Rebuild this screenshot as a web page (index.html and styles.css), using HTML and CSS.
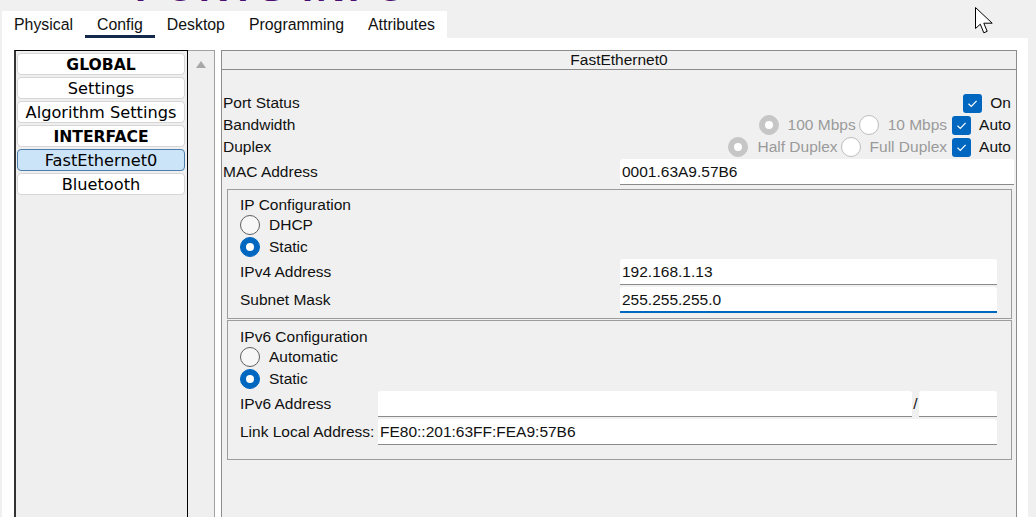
FILE: index.html
```html
<!DOCTYPE html>
<html lang="en">
<head>
<meta charset="utf-8">
<title>FastEthernet0 Config</title>
<link rel="stylesheet" href="styles.css">
</head>
<body>
<div class="title-strip"><span class="title">PORTS INFO</span></div>
<nav class="tabs">
  <span class="tab">Physical</span>
  <span class="tab active">Config</span>
  <span class="tab">Desktop</span>
  <span class="tab">Programming</span>
  <span class="tab">Attributes</span>
</nav>
<div class="content">
  <aside class="sidebar">
    <ul class="nav-list">
      <li class="nav-item head">GLOBAL</li>
      <li class="nav-item">Settings</li>
      <li class="nav-item">Algorithm Settings</li>
      <li class="nav-item head">INTERFACE</li>
      <li class="nav-item selected">FastEthernet0</li>
      <li class="nav-item">Bluetooth</li>
    </ul>
    <div class="scrollbar"><span class="arrow-up"></span></div>
  </aside>
  <section class="panel">
    <header class="panel-head">FastEthernet0</header>
    <div class="panel-body">
      <div class="line">
        <span class="label">Port Status</span>
        <div class="controls">
          <span class="opt chk"><span class="check"><svg viewBox="0 0 19 19" width="19" height="19"><path d="M5.5 9.8 L8.3 12.4 L13.6 6.8" fill="none" stroke="#fff" stroke-width="1.2"/></svg></span><span>On</span></span>
        </div>
      </div>
      <div class="line">
        <span class="label">Bandwidth</span>
        <div class="controls">
          <span class="opt dis"><span class="radio dis on"></span><span>100 Mbps</span></span>
          <span class="opt dis"><span class="radio dis"></span><span>10 Mbps</span></span>
          <span class="opt chk"><span class="check"><svg viewBox="0 0 19 19" width="19" height="19"><path d="M5.5 9.8 L8.3 12.4 L13.6 6.8" fill="none" stroke="#fff" stroke-width="1.2"/></svg></span><span>Auto</span></span>
        </div>
      </div>
      <div class="line">
        <span class="label">Duplex</span>
        <div class="controls">
          <span class="opt dis"><span class="radio dis on"></span><span>Half Duplex</span></span>
          <span class="opt dis"><span class="radio dis"></span><span>Full Duplex</span></span>
          <span class="opt chk"><span class="check"><svg viewBox="0 0 19 19" width="19" height="19"><path d="M5.5 9.8 L8.3 12.4 L13.6 6.8" fill="none" stroke="#fff" stroke-width="1.2"/></svg></span><span>Auto</span></span>
        </div>
      </div>
      <div class="field-row mac">
        <span class="label wide">MAC Address</span>
        <span class="field">0001.63A9.57B6</span>
      </div>

      <div class="group ipv4">
        <div class="group-title">IP Configuration</div>
        <div class="radio-row"><span class="radio"></span><span>DHCP</span></div>
        <div class="radio-row"><span class="radio on"></span><span>Static</span></div>
        <div class="field-row first">
          <span class="label v4">IPv4 Address</span>
          <span class="field">192.168.1.13</span>
        </div>
        <div class="field-row">
          <span class="label v4">Subnet Mask</span>
          <span class="field focus">255.255.255.0</span>
        </div>
      </div>

      <div class="group ipv6">
        <div class="group-title">IPv6 Configuration</div>
        <div class="radio-row"><span class="radio"></span><span>Automatic</span></div>
        <div class="radio-row"><span class="radio on"></span><span>Static</span></div>
        <div class="field-row first">
          <span class="label v6">IPv6 Address</span>
          <span class="field"></span>
          <span class="slash">/</span>
          <span class="field prefix"></span>
        </div>
        <div class="field-row">
          <span class="label v6">Link Local Address:</span>
          <span class="field">FE80::201:63FF:FEA9:57B6</span>
        </div>
      </div>
    </div>
  </section>
</div>
<svg class="cursor" viewBox="0 0 19 28" width="19" height="28"><path d="M0.5 0.5 L0.5 21.5 L5.3 17.2 L8.8 25.8 L12.2 24.3 L8.8 16.2 L17.2 16.2 Z" fill="#fff" stroke="#000" stroke-width="1" stroke-linejoin="miter"/></svg>
</body>
</html>
```
FILE: styles.css
```css
* { box-sizing: border-box; }
html, body { margin: 0; padding: 0; }
body {
  background: #f0f0f0;
  font-family: "Liberation Sans", Arial, sans-serif;
  color: #111;
  width: 1036px;
  height: 517px;
  overflow: hidden;
  position: relative;
}

.title-strip {
  height: 11px;
  overflow: hidden;
  display: flex;
  align-items: flex-end;
  padding-left: 135px;
}
.title {
  font-size: 40px;
  line-height: 40px;
  margin-bottom: 4px;
  font-weight: bold;
  color: #4b0f72;
  letter-spacing: 3px;
  white-space: nowrap;
}

.tabs {
  display: flex;
  width: max-content;
  margin-left: 2px;
  height: 27px;
  background: #fff;
}
.tab {
  padding: 0 12px;
  font-size: 15.85px;
  line-height: 27px;
  height: 27px;
  color: #111;
}
.tab.active { box-shadow: inset 0 -3px #13294b; }

.content {
  display: flex;
  margin-left: 2px;
  width: 1026px;
  height: 479px;
  background: #fff;
  padding: 12px 11px 0 12px;
}

.sidebar { display: flex; width: 201px; flex: none; }
.nav-list {
  list-style: none;
  margin: 0;
  width: 174px;
  border: 1px solid #000;
  border-left: 2px solid #333;
  border-bottom: none;
  background: #efefef;
  padding: 2px 2px 2px 1px;
  display: flex;
  flex-direction: column;
  gap: 2px;
}
.nav-item {
  height: 22px;
  border: 1px solid #d6d6d6;
  border-radius: 4px;
  background: #fff;
  text-align: center;
  font-family: "DejaVu Sans", Verdana, sans-serif;
  font-size: 16.2px;
  line-height: 20px;
  padding-top: 1px;
  color: #000;
}
.nav-item.head { font-weight: bold; font-size: 15.6px; }
.nav-item.selected { background: #cce4f7; border-color: #4d7eae; }

.scrollbar {
  width: 27px;
  border-top: 1px solid #a0a0a0;
  border-right: 1px solid #a0a0a0;
  background: #efefef;
  padding: 10px 0 0 8px;
}
.arrow-up {
  display: block;
  width: 0;
  height: 0;
  border-left: 5px solid transparent;
  border-right: 5px solid transparent;
  border-bottom: 7px solid #a8a8a8;
}

.panel {
  margin-left: 6px;
  width: 796px;
  flex: none;
  border: 1px solid #8c8c8c;
  border-bottom: none;
  background: #f0f0f0;
  display: flex;
  flex-direction: column;
}
.panel-head {
  height: 19px;
  border-bottom: 1px solid #8c8c8c;
  text-align: center;
  font-size: 15.5px;
  line-height: 18px;
}
.panel-body {
  padding: 22px 2px 0 1px;
  font-size: 15.5px;
}

.line {
  display: flex;
  align-items: center;
  height: 22px;
}
.controls {
  margin-left: auto;
  margin-right: 3px;
  display: flex;
  align-items: center;
  gap: 3px;
}
.opt {
  display: inline-flex;
  align-items: center;
  gap: 9px;
}
.opt.dis { color: #9a9a9a; }
.opt.chk { gap: 8px; margin-left: 2px; }

.check {
  width: 19px;
  height: 19px;
  border-radius: 3px;
  background: #0067c0;
  display: block;
  flex: none;
}
.check svg { display: block; }

.radio {
  width: 20px;
  height: 20px;
  border-radius: 50%;
  border: 1px solid #5f5f5f;
  background: #f7f7f7;
  flex: none;
  display: grid;
  place-items: center;
}
.radio.on { background: #0067c0; border-color: #0067c0; }
.radio.on::after {
  content: "";
  width: 8px;
  height: 8px;
  border-radius: 50%;
  background: #fff;
}
.radio.dis { border-color: #bdbdbd; background: #fff; }
.radio.dis.on { background: #c6c6c6; border-color: #c6c6c6; }

.field-row {
  display: flex;
  align-items: center;
  height: 26px;
  margin-top: 2px;
}
.field-row.first { margin-top: 1px; }
.label { flex: none; white-space: nowrap; }
.label.wide { width: 397px; }
.label.v4 { width: 380px; }
.label.v6 { width: 138px; }

.field {
  flex: 1;
  height: 26px;
  background: #fff;
  border-bottom: 1px solid #8a8a8a;
  border-radius: 3px 3px 0 0;
  padding: 0 2px;
  line-height: 25px;
  white-space: nowrap;
}
.field.focus { border-bottom: 2px solid #0067c0; }
.field.prefix { flex: none; width: 78px; }
.slash { width: 7px; text-align: center; flex: none; }

.mac { margin-top: 1px; }

.group {
  margin: 4px 2px 0 4px;
  border: 1px solid #9c9c9c;
  padding: 6px 14px 5px 12px;
}
.group.ipv6 { margin-top: 1px; padding-top: 7px; padding-bottom: 14px; }
.group-title { height: 18px; line-height: 18px; }
.radio-row {
  display: flex;
  align-items: center;
  gap: 9px;
  height: 22px;
}

.cursor {
  position: absolute;
  left: 975px;
  top: 7px;
}
```
